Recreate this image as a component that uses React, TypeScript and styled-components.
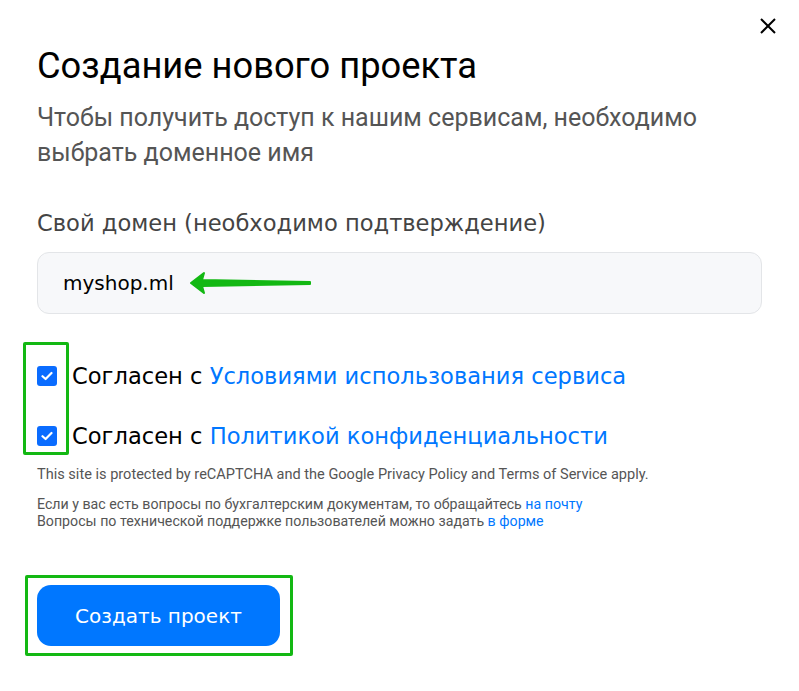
import React, { useState } from "react";
import styled, { createGlobalStyle } from "styled-components";

const GlobalStyle = createGlobalStyle`
  html, body {
    margin: 0;
    padding: 0;
    background: #ffffff;
  }
  body {
    font-family: "Roboto", "Liberation Sans", sans-serif;
  }
`;

const Modal = styled.div`
  position: relative;
  width: 799px;
  height: 691px;
  box-sizing: border-box;
  padding: 44px 37px 0 37px;
  background: #ffffff;
  display: flex;
  flex-direction: column;
`;

const CloseButton = styled.button`
  position: absolute;
  top: 15px;
  right: 20px;
  width: 22px;
  height: 22px;
  padding: 0;
  border: none;
  background: transparent;
  cursor: pointer;
  display: flex;
  align-items: center;
  justify-content: center;
`;

const Title = styled.h1`
  margin: 0;
  font-family: "Roboto", "Liberation Sans", sans-serif;
  font-weight: 400;
  font-size: 36.3px;
  line-height: 44px;
  color: #000000;
`;

const Subtitle = styled.p`
  margin: 12px 0 0 0;
  font-family: "Roboto", "Liberation Sans", sans-serif;
  font-size: 25px;
  line-height: 35px;
  color: #555555;
`;

const FieldLabel = styled.label`
  margin-top: 38px;
  font-family: "DejaVu Sans", "Open Sans", sans-serif;
  font-size: 22.6px;
  line-height: 30px;
  color: #444444;
`;

const InputWrap = styled.div`
  position: relative;
  margin-top: 14px;
`;

const DomainInput = styled.input`
  width: 100%;
  box-sizing: border-box;
  height: 62px;
  padding: 0 25px;
  border: 1px solid #e3e5e8;
  border-radius: 12px;
  background: #f7f8fa;
  font-family: "DejaVu Sans", "Open Sans", sans-serif;
  font-size: 20px;
  color: #000000;
  outline: none;
`;

const Arrow = styled.svg`
  position: absolute;
  left: 152px;
  top: 19px;
  pointer-events: none;
`;

const Agreements = styled.div`
  position: relative;
  margin-top: 46px;
  display: flex;
  flex-direction: column;
  gap: 28px;
`;

const Highlight = styled.div<{ $w: number; $h: number; $l: number; $t: number }>`
  position: absolute;
  left: ${(p) => p.$l}px;
  top: ${(p) => p.$t}px;
  width: ${(p) => p.$w}px;
  height: ${(p) => p.$h}px;
  box-sizing: border-box;
  border: 3px solid #13b813;
  border-radius: 2px;
  pointer-events: none;
`;

const CheckRow = styled.label`
  display: flex;
  align-items: center;
  gap: 15px;
  height: 32px;
  font-family: "DejaVu Sans", "Open Sans", sans-serif;
  font-size: 22.6px;
  color: #000000;
  cursor: pointer;
`;

const Box = styled.span<{ $on: boolean }>`
  flex: none;
  width: 20px;
  height: 20px;
  border-radius: 3px;
  background: ${(p) => (p.$on ? "#0a6cff" : "#ffffff")};
  border: ${(p) => (p.$on ? "none" : "1px solid #b8c1cc")};
  display: flex;
  align-items: center;
  justify-content: center;
`;

const Link = styled.a`
  color: #0077ff;
  text-decoration: none;
`;

const Note = styled.p<{ $top: number; $size: number }>`
  margin: ${(p) => p.$top}px 0 0 0;
  font-family: "Roboto", "Liberation Sans", sans-serif;
  font-size: ${(p) => p.$size}px;
  line-height: 17px;
  color: #555555;
`;

const ButtonFrame = styled.div`
  align-self: flex-start;
  margin: 45px 0 0 -12px;
  padding: 7px 10px 7px 9px;
  border: 3px solid #13b813;
  border-radius: 2px;
`;

const SubmitButton = styled.button`
  width: 243px;
  height: 61px;
  border: none;
  border-radius: 14px;
  background: #0077ff;
  color: #ffffff;
  font-family: "DejaVu Sans", "Open Sans", sans-serif;
  font-size: 20px;
  cursor: pointer;
`;

function Checkbox({ on }: { on: boolean }) {
  return (
    <Box $on={on}>
      {on && (
        <svg width="12" height="10" viewBox="0 0 12 10">
          <path
            d="M1.5 5.2 L4.6 8 L10.5 2"
            fill="none"
            stroke="#ffffff"
            strokeWidth="2.2"
            strokeLinecap="round"
            strokeLinejoin="round"
          />
        </svg>
      )}
    </Box>
  );
}

export default function App() {
  const [domain, setDomain] = useState("myshop.ml");
  const [terms, setTerms] = useState(true);
  const [privacy, setPrivacy] = useState(true);

  return (
    <>
      <GlobalStyle />
      <Modal>
        <CloseButton aria-label="Закрыть">
          <svg width="18" height="18" viewBox="0 0 18 18">
            <path d="M2 2 L16 16 M16 2 L2 16" stroke="#000" strokeWidth="2" />
          </svg>
        </CloseButton>

        <Title>Создание нового проекта</Title>
        <Subtitle>
          Чтобы получить доступ к нашим сервисам, необходимо
          <br />
          выбрать доменное имя
        </Subtitle>

        <FieldLabel>Свой домен (необходимо подтверждение)</FieldLabel>
        <InputWrap>
          <DomainInput value={domain} onChange={(e) => setDomain(e.target.value)} />
          <Arrow width="124" height="24" viewBox="0 0 124 24">
            <path d="M2 12 L15 2 L13 9 L121 11 L121 13 L13 15 L15 22 Z" fill="#13b813" strokeLinejoin="round" stroke="#13b813" strokeWidth="2" />
          </Arrow>
        </InputWrap>

        <Agreements>
          <Highlight $l={-14} $t={-18} $w={46} $h={113} />
          <CheckRow onClick={() => setTerms(!terms)}>
            <Checkbox on={terms} />
            <span>
              Согласен с <Link href="#">Условиями использования сервиса</Link>
            </span>
          </CheckRow>
          <CheckRow onClick={() => setPrivacy(!privacy)}>
            <Checkbox on={privacy} />
            <span>
              Согласен с <Link href="#">Политикой конфиденциальности</Link>
            </span>
          </CheckRow>
        </Agreements>

        <Note $top={14} $size={14.55}>
          This site is protected by reCAPTCHA and the Google Privacy Policy and Terms of Service apply.
        </Note>
        <Note $top={13} $size={14.2}>
          Если у вас есть вопросы по бухгалтерским документам, то обращайтесь <Link href="#">на почту</Link>
          <br />
          Вопросы по технической поддержке пользователей можно задать <Link href="#">в форме</Link>
        </Note>

        <ButtonFrame>
          <SubmitButton>Создать проект</SubmitButton>
        </ButtonFrame>
      </Modal>
    </>
  );
}
